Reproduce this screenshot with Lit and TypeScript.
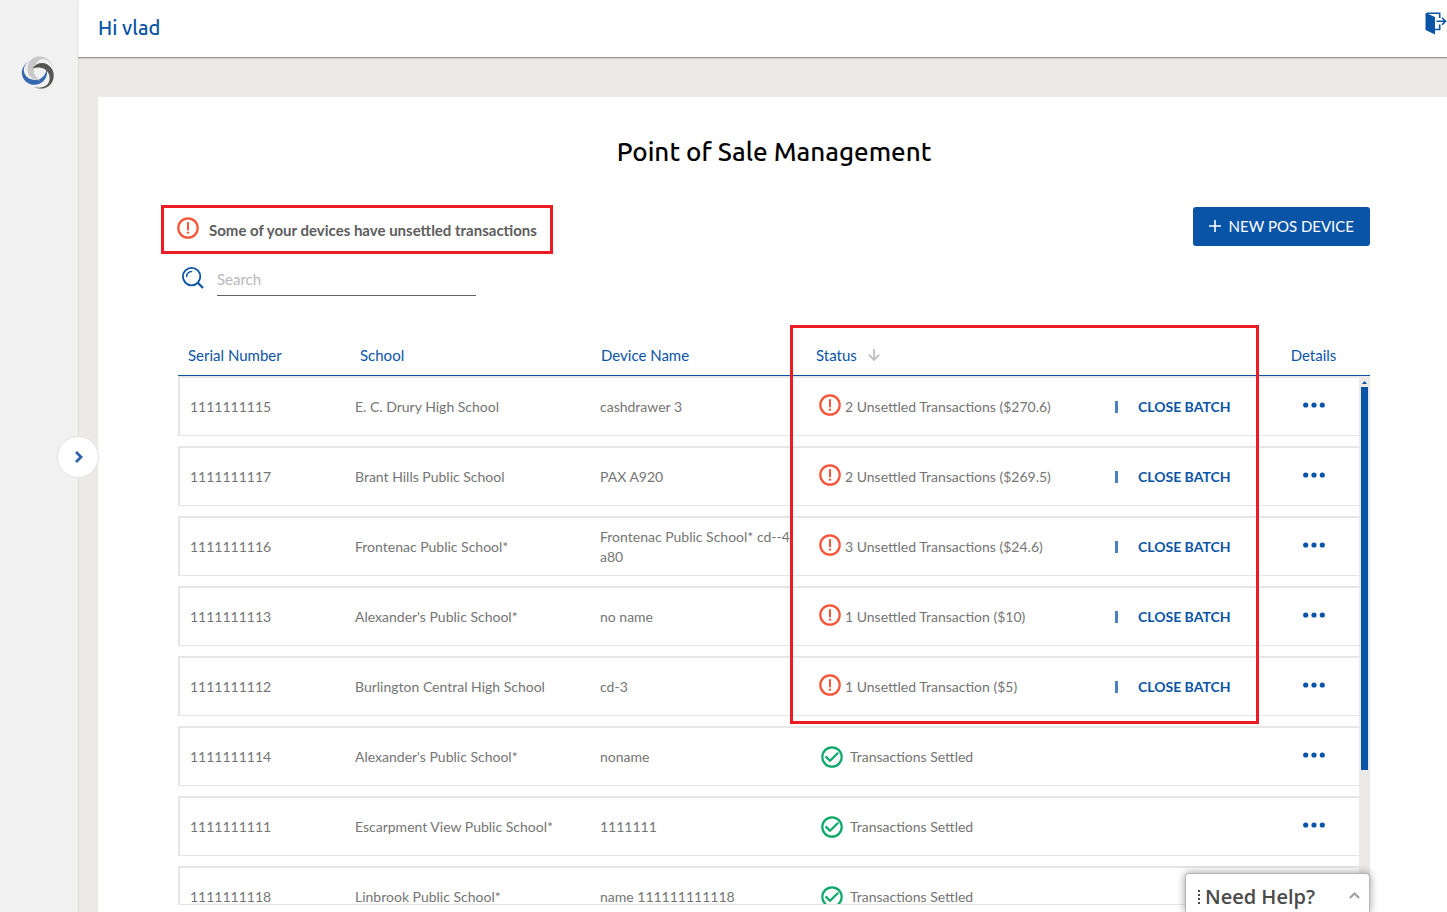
import { LitElement, html, css } from "lit";
import { customElement, property } from "lit/decorators.js";

interface Device {
  serial: string;
  school: string;
  name: string;
  unsettled?: string;
}

const DEVICES: Device[] = [
  { serial: "1111111115", school: "E. C. Drury High School", name: "cashdrawer 3", unsettled: "2 Unsettled Transactions ($270.6)" },
  { serial: "1111111117", school: "Brant Hills Public School", name: "PAX A920", unsettled: "2 Unsettled Transactions ($269.5)" },
  { serial: "1111111116", school: "Frontenac Public School*", name: "Frontenac Public School* cd--4 a80", unsettled: "3 Unsettled Transactions ($24.6)" },
  { serial: "1111111113", school: "Alexander's Public School*", name: "no name", unsettled: "1 Unsettled Transaction ($10)" },
  { serial: "1111111112", school: "Burlington Central High School", name: "cd-3", unsettled: "1 Unsettled Transaction ($5)" },
  { serial: "1111111114", school: "Alexander's Public School*", name: "noname" },
  { serial: "1111111111", school: "Escarpment View Public School*", name: "1111111" },
  { serial: "1111111118", school: "Linbrook Public School*", name: "name 111111111118" },
];

const warningIcon = html`<svg width="22" height="22" viewBox="0 0 22 22" fill="none" stroke="#fb5335" aria-hidden="true">
  <circle cx="11" cy="11" r="9.700" stroke-width="2.200" />
  <path d="M11 6v6.600" stroke-width="2" stroke-linecap="round" />
  <circle cx="11" cy="15.600" r="1.200" fill="#fb5335" stroke="none" />
</svg>`;

const settledIcon = html`<svg width="22" height="22" viewBox="0 0 22 22" fill="none" stroke="#0aa869" stroke-width="2.200" aria-hidden="true">
  <circle cx="11" cy="11" r="9.700" />
  <path d="M4.600 10.400 9 14.800 17.200 6.800" />
</svg>`;

const baseStyles = css`
  * {
    box-sizing: border-box;
  }
  svg {
    display: block;
    flex: none;
  }
  button {
    font: inherit;
    border: 0;
    background: none;
    padding: 0;
    cursor: pointer;
  }
`;

@customElement("device-table")
export class DeviceTable extends LitElement {
  @property({ attribute: false }) devices: Device[] = [];

  static styles = [
    baseStyles,
    css`
      :host {
        display: grid;
        position: relative;
        min-height: 0;
        grid-template-rows: minmax(0, 1fr);
      }
      .table {
        grid-area: 1 / 1;
        display: flex;
        flex-direction: column;
        min-height: 0;
        color: #757575;
        font-size: 14px;
        line-height: 20px;
      }
      .head {
        display: block;
        border-bottom: 1px solid #0a54a8;
      }
      .body {
        display: flex;
        flex-direction: column;
        gap: 10px;
        flex: 1;
        min-height: 0;
        overflow: hidden;
        margin-right: 11px;
        border-bottom: 1px solid #e6e6e6;
      }
      .row {
        display: grid;
        align-items: center;
        text-align: left;
      }
      .head .row {
        grid-template-columns: 172fr 241fr 215fr 452fr 91fr;
        height: 40px;
        padding: 0 11px 0 10px;
      }
      .body .row {
        grid-template-columns: 165fr 245fr 216fr 452fr 91fr;
        height: 60px;
        flex: none;
        padding-left: 10px;
        border: solid #e6e6e6;
        border-width: 2px 0 1px 2px;
      }
      th {
        padding: 0;
        color: #0a54a8;
        font-size: 15px;
        font-weight: 400;
      }
      td {
        padding: 0;
      }
      .sort {
        display: flex;
        align-items: center;
        gap: 11px;
        color: inherit;
      }
      .name {
        padding-right: 24px;
      }
      .state {
        display: flex;
        align-items: center;
        gap: 4px;
        padding-left: 3px;
      }
      .state svg {
        margin-bottom: 4px;
      }
      .settled {
        gap: 7px;
        padding-left: 5px;
      }
      .settled svg {
        margin-bottom: 0;
      }
      .close {
        display: flex;
        align-items: center;
        gap: 20px;
        width: 153px;
        margin-left: auto;
        color: #0a54a8;
        font-weight: 700;
      }
      .close::before {
        content: "";
        width: 3px;
        height: 12px;
        background: #4a80c0;
      }
      .details {
        display: flex;
        justify-content: center;
      }
      .details button {
        padding-bottom: 4px;
      }
      .scrollbar {
        grid-area: 1 / 1;
        justify-self: end;
        width: 11px;
        margin-top: 41px;
        padding: 4px 2px 0;
        background: #ebeae6;
      }
      .thumb {
        height: 383px;
        max-height: 74%;
        margin-top: 3px;
        background: #0a54a8;
      }
      .marker {
        position: absolute;
        top: -10px;
        left: 51.35%;
        width: 469px;
        height: 399px;
        border: 3px solid #ed1c24;
        pointer-events: none;
      }
    `,
  ];

  render() {
    return html`
      <table class="table">
        <thead class="head">
          <tr class="row">
            <th scope="col">Serial Number</th>
            <th scope="col">School</th>
            <th scope="col">Device Name</th>
            <th scope="col">
              <button class="sort">
                Status
                <svg width="12" height="12" viewBox="0 0 12 12" fill="none" stroke="#c0c0c0" stroke-width="1.800" aria-hidden="true">
                  <path d="M6 0v11M.7 5.600 6 11l5.300-5.400" />
                </svg>
              </button>
            </th>
            <th class="details" scope="col">Details</th>
          </tr>
        </thead>
        <tbody class="body">
          ${this.devices.map(
            (d) => html`<tr class="row">
              <td>${d.serial}</td>
              <td>${d.school}</td>
              <td class="name">${d.name}</td>
              ${d.unsettled
                ? html`<td class="state">${warningIcon}<span>${d.unsettled}</span><button class="close">CLOSE BATCH</button></td>`
                : html`<td class="state settled">${settledIcon}<span>Transactions Settled</span></td>`}
              <td class="details">
                <button aria-label=${`Details of ${d.serial}`}>
                  <svg width="22" height="6" viewBox="0 0 22 6" fill="#0a54a8" aria-hidden="true">
                    <circle cx="2.700" cy="3" r="2.600" />
                    <circle cx="11" cy="3" r="2.600" />
                    <circle cx="19.300" cy="3" r="2.600" />
                  </svg>
                </button>
              </td>
            </tr>`
          )}
        </tbody>
      </table>
      <div class="scrollbar" aria-hidden="true">
        <svg width="7" height="4" viewBox="0 0 7 4" fill="#0a54a8"><path d="M1 4 3.500 1 6 4z" /></svg>
        <div class="thumb"></div>
      </div>
      <div class="marker"></div>
    `;
  }
}

@customElement("app-root")
export class AppRoot extends LitElement {
  static styles = [
    baseStyles,
    css`
      :host {
        display: grid;
        grid-template-columns: 78px minmax(0, 1fr);
        height: 100vh;
        overflow: hidden;
        position: relative;
        background: #ebeae6;
        font-family: Lato, "Liberation Sans", sans-serif;
      }
      .sidebar {
        background: #f1f1f1;
        display: flex;
        justify-content: center;
        padding: 56px 2px 0 0;
      }
      .logo {
        height: 33px;
      }
      .toggle {
        position: absolute;
        left: 57px;
        top: 50%;
        width: 42px;
        height: 42px;
        margin-top: -20px;
        padding-left: 1px;
        display: grid;
        place-items: center;
        border: 1px solid #e2e2e0;
        border-radius: 50%;
        background: #fff;
      }
      .page {
        display: flex;
        flex-direction: column;
        min-height: 0;
        box-shadow: inset 1px 0 #dddcd8;
      }
      .topbar {
        display: flex;
        align-items: center;
        justify-content: space-between;
        flex: none;
        height: 58px;
        padding: 0 0 2px 20px;
        background: #fff;
        border-bottom: 1px solid #9b9c98;
        box-shadow: 0 1px 1px #cfcec9, inset 1px 0 #ededeb;
      }
      .greeting {
        color: #0a54a8;
        font: 500 20px/28px "Ubuntu Medium", Ubuntu, "Noto Sans", sans-serif;
      }
      .logout {
        margin-bottom: 8px;
      }
      .panel {
        flex: 1;
        min-height: 0;
        display: flex;
        flex-direction: column;
        margin: 39px 0 0 20px;
        padding: 37px 77px 7px 80px;
        background: #fff;
      }
      .title {
        margin: 0;
        text-align: center;
        color: #000;
        font: 500 26px/36px "Ubuntu Medium", Ubuntu, "Noto Sans", sans-serif;
      }
      .actions {
        display: flex;
        justify-content: space-between;
        align-items: flex-start;
        margin-top: 35px;
      }
      .alert {
        display: flex;
        align-items: center;
        gap: 10px;
        height: 49px;
        margin-left: -17px;
        padding: 0 13px;
        border: 3px solid #ed1c24;
        color: #5d5d5d;
        font-size: 15px;
        line-height: 20px;
        font-weight: 700;
      }
      .alert svg {
        margin-bottom: 4px;
      }
      .create {
        display: flex;
        align-items: center;
        gap: 8px;
        height: 39px;
        margin-top: 2px;
        padding: 0 16px 1px;
        border-radius: 3px;
        background: #0a54a8;
        color: #fff;
        font-size: 15px;
        line-height: 20px;
      }
      .search {
        display: flex;
        align-items: center;
        gap: 13px;
        margin: 10px 0 39px 4px;
      }
      .search svg {
        margin-bottom: 4px;
      }
      .query {
        width: 259px;
        height: 32px;
        padding: 0 0 2px;
        border: 0;
        border-bottom: 1px solid #616161;
        font: 15px/20px Lato, sans-serif;
        background: none;
      }
      .query::placeholder {
        color: #b9b9b9;
      }
      .devices {
        flex: 1;
      }
      .help {
        position: absolute;
        right: 77px;
        bottom: 0;
        width: 185px;
        height: 39px;
        display: flex;
        align-items: center;
        gap: 4px;
        padding: 8px 9px 0 12px;
        border: 1px solid #b5b5b5;
        border-bottom: 0;
        border-radius: 4px 4px 0 0;
        background: #fff;
        box-shadow: 0 0 8px rgba(0, 0, 0, 0.4);
        color: #4a4a4a;
        font: 600 20px/28px "Open Sans", sans-serif;
      }
      .chevron {
        margin: 0 0 4px auto;
      }
    `,
  ];

  render() {
    return html`
      <aside class="sidebar">
        <svg class="logo" width="34" height="33" viewBox="0 0 34 33" role="img" aria-label="Home">
          <path fill="#3568b0" d="M9.500 4.500C3 7.500-.8 14 1.500 20.500 4 27.500 12 31 19 27.500c5.500-3 8-8.500 6.800-14.500C24.500 20 19.500 24.500 13.500 24 7 23.500 2.500 19 2.800 13 3.200 9.500 5.500 6.500 9.500 4.500z" />
          <path fill="#c8c8c8" d="M31.800 13.500C31.800 5.500 25-.5 17 .6 9.500 1.700 5 8.500 6.800 15.500 8 21 13 24.500 19.500 24.300c-5.500-2.800-8-8-6-13.300C15.500 5 20 2 24 3.300c4.500 1.500 7 5.200 7.800 10.200z" />
          <path fill="#555552" d="M11.500 12.500C14.500 7.500 21 5.500 26.500 8.500c5.500 3.500 7.500 9.500 5.500 15.500-2.500 7.500-10.500 10.800-19 7 7 1.800 12.500-.3 14.700-4.500 2.200-5 .5-11-4.200-13.500-3.500-1.800-8-2-12-.5z" />
        </svg>
      </aside>
      <div class="page">
        <header class="topbar">
          <span class="greeting">Hi vlad</span>
          <button class="logout" aria-label="Log out">
            <svg width="22" height="23" viewBox="0 0 22 23" fill="none" stroke="#0a54a8" stroke-width="1.600" aria-hidden="true">
              <path d="M2 1.300h12.700V6M14.700 12.500v5H10" />
              <path fill="#0a54a8" stroke="none" d="M.5.800 10 5v17.500L.5 18z" />
              <path d="M11.500 9.300h8.800M17 5.800 20.500 9.300 17 12.800" />
            </svg>
          </button>
        </header>
        <main class="panel">
          <h1 class="title">Point of Sale Management</h1>
          <div class="actions">
            <div class="alert" role="status">${warningIcon}<span>Some of your devices have unsettled transactions</span></div>
            <button class="create">
              <svg width="12" height="12" viewBox="0 0 12 12" fill="none" stroke="#fff" stroke-width="1.600" aria-hidden="true"><path d="M6 0v12M0 6h12" /></svg>
              NEW POS DEVICE
            </button>
          </div>
          <div class="search">
            <svg width="22" height="22" viewBox="0 0 22 22" fill="none" stroke="#0a54a8" aria-hidden="true">
              <circle cx="9.600" cy="9.600" r="8.700" stroke-width="1.800" />
              <path d="m15.800 15.800 5.200 5.200" stroke-width="2.200" />
              <path d="M4.600 9.600a5 5 0 0 1 5-5" stroke-width="1.500" stroke-linecap="round" />
            </svg>
            <input class="query" type="search" placeholder="Search" aria-label="Search" />
          </div>
          <device-table class="devices" .devices=${DEVICES}></device-table>
        </main>
      </div>
      <button class="toggle" aria-label="Expand menu">
        <svg width="10" height="14" viewBox="0 0 10 14" fill="none" stroke="#3063ad" stroke-width="2.800" aria-hidden="true"><path d="m2 2 5 5-5 5" /></svg>
      </button>
      <button class="help">
        <svg width="3" height="16" viewBox="0 0 3 16" fill="#4a4a4a" aria-hidden="true"><path d="M0 1h2v2H0zM0 5h2v2H0zM0 9h2v2H0zM0 13h2v2H0z" /></svg>
        <span>Need Help?</span>
        <svg class="chevron" width="11" height="7" viewBox="0 0 11 7" fill="none" stroke="#a0a0a0" stroke-width="2.200" aria-hidden="true"><path d="m.8 6 4.700-4.500L10.200 6" /></svg>
      </button>
    `;
  }
}
